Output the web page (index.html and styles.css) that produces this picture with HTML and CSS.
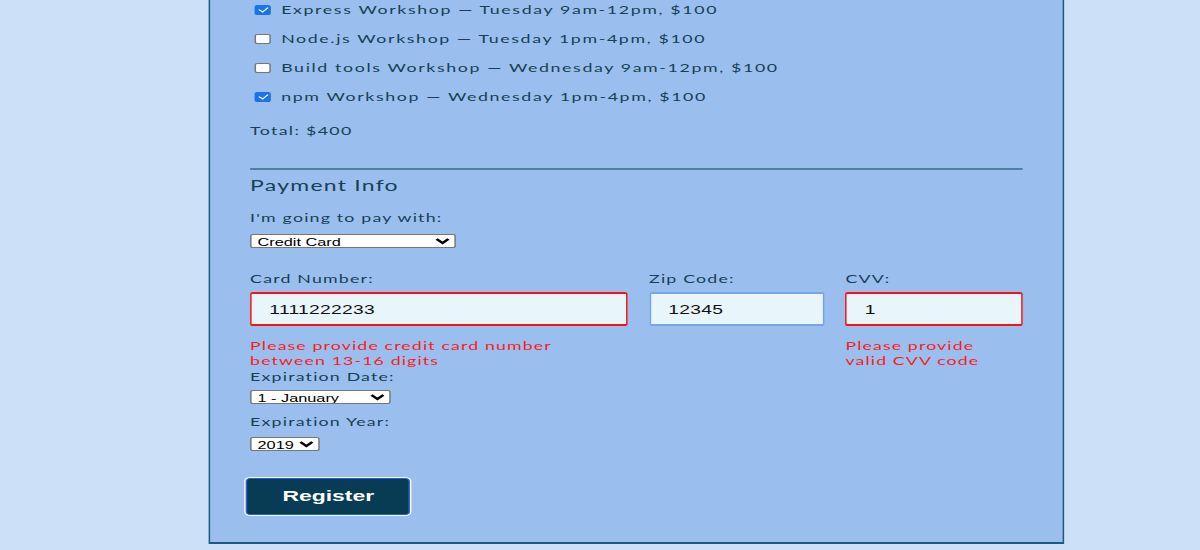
FILE: index.html
```html
<!DOCTYPE html>
<html lang="en">
<head>
<meta charset="utf-8">
<title>Register</title>
<link rel="stylesheet" href="styles.css">
</head>
<body>
<div class="page">
  <form class="form">
    <fieldset class="activities">
      <label class="activity"><input type="checkbox" class="check" checked><span>Express Workshop — Tuesday 9am-12pm, $100</span></label>
      <label class="activity"><input type="checkbox" class="check"><span>Node.js Workshop — Tuesday 1pm-4pm, $100</span></label>
      <label class="activity"><input type="checkbox" class="check"><span>Build tools Workshop — Wednesday 9am-12pm, $100</span></label>
      <label class="activity"><input type="checkbox" class="check" checked><span>npm Workshop — Wednesday 1pm-4pm, $100</span></label>
      <p class="total">Total: $400</p>
    </fieldset>

    <fieldset class="payment">
      <h3 class="section-title">Payment Info</h3>
      <label class="label pay-label" for="payment">I'm going to pay with:</label>
      <select id="payment" class="select select-pay">
        <option>Credit Card</option>
      </select>

      <div class="card-grid">
        <label class="label" for="cc-num">Card Number:</label>
        <label class="label" for="zip">Zip Code:</label>
        <label class="label" for="cvv">CVV:</label>
        <input id="cc-num" class="field invalid" type="text" value="1111222233">
        <input id="zip" class="field valid" type="text" value="12345">
        <input id="cvv" class="field invalid" type="text" value="1">
        <p class="error">Please provide credit card number between 13-16 digits</p>
        <p class="error-spacer"></p>
        <p class="error">Please provide valid CVV code</p>
      </div>

      <label class="label exp-label" for="exp-month">Expiration Date:</label>
      <select id="exp-month" class="select select-month">
        <option>1 - January</option>
      </select>
      <label class="label year-label" for="exp-year">Expiration Year:</label>
      <select id="exp-year" class="select select-year">
        <option>2019</option>
      </select>
    </fieldset>

    <button type="button" class="register">Register</button>
  </form>
</div>
</body>
</html>
```

FILE: styles.css
```css
html, body {
  margin: 0;
  padding: 0;
  background: #cce0f8;
  overflow: hidden;
}

.page {
  width: 811px;
  transform: scaleX(1.48);
  transform-origin: 0 0;
  font-family: Lato, "Liberation Sans", sans-serif;
  color: #173f55;
}

.form {
  box-sizing: border-box;
  width: 578px;
  margin: -60px 0 0 140.5px;
  padding: 53px 27px 27.5px 27.5px;
  background: #9abfee;
  border: 2px solid #1e5a80;
  border-left-width: 1.5px;
  border-right-width: 1.5px;
}

fieldset {
  border: 0;
  margin: 0;
  padding: 0;
  min-width: 0;
}

.activity {
  display: flex;
  align-items: center;
  height: 29px;
  font-size: 12px;
  letter-spacing: 1.1px;
}

.check {
  appearance: none;
  -webkit-appearance: none;
  position: relative;
  box-sizing: border-box;
  flex: none;
  width: 10.8px;
  height: 10px;
  margin: 0 6.8px 0 3.4px;
  background: #fff;
  border: 1px solid #767676;
  border-radius: 2px;
}

.check:checked {
  background: #1a73e8;
  border-color: #1a73e8;
}

.check:checked::after {
  content: "";
  position: absolute;
  left: 2.8px;
  top: 0.6px;
  width: 3px;
  height: 5px;
  border: solid #fff;
  border-width: 0 1.6px 1.6px 0;
  transform: rotate(40deg);
}

.total {
  margin: 10px 0 0;
  line-height: 20px;
  font-size: 12px;
  letter-spacing: 0.9px;
}

.payment {
  margin-top: 27px;
  border-top: 2px solid #4f7fa3;
}

.section-title {
  margin: 4px 0 0;
  font-size: 15.5px;
  font-weight: normal;
  line-height: 22px;
  letter-spacing: 0.85px;
  color: #173f58;
}

.label {
  display: block;
  font-size: 12px;
  line-height: 20px;
  letter-spacing: 0.8px;
}

.pay-label {
  margin-top: 12px;
}

.select {
  display: block;
  box-sizing: border-box;
  height: 14px;
  padding: 0;
  font-family: "Liberation Sans", Arial, sans-serif;
  font-size: 11px;
  color: #000;
  background: #fff;
  border: 1px solid #767676;
  border-radius: 2px;
}

.select-pay {
  margin-top: 6px;
  width: 139px;
}

.card-grid {
  display: grid;
  grid-template-columns: 254.7fr 118.2fr 118.9fr;
  column-gap: 14.2px;
  margin-top: 21px;
}

.field {
  box-sizing: border-box;
  width: 100%;
  height: 34px;
  margin-top: 3px;
  padding: 0 0 0 12px;
  font-family: "Liberation Sans", Arial, sans-serif;
  font-size: 13px;
  letter-spacing: 0.2px;
  color: #111;
  background: #e8f5fa;
  border: 2px solid;
  border-left-width: 1.5px;
  border-right-width: 1.5px;
  border-radius: 2px;
  outline: none;
}

.invalid {
  border-color: #ff1010;
}

.valid {
  border-color: #78a6e4;
}

.error,
.error-spacer {
  max-width: 90%;
  margin: 11.5px 0 0;
  font-size: 12px;
  line-height: 15px;
  letter-spacing: 0.75px;
  color: #ff1a1a;
}

.exp-label {
  line-height: 17px;
}

.select-month {
  margin-top: 5.5px;
  width: 94.6px;
}

.year-label {
  margin-top: 8px;
}

.select-year {
  margin-top: 5px;
  width: auto;
}

.register {
  display: block;
  box-sizing: border-box;
  width: 111px;
  height: 37px;
  margin: 26.5px 0 0 -2.7px;
  padding: 0;
  font-family: "Liberation Sans", Arial, sans-serif;
  font-size: 15.5px;
  font-weight: bold;
  color: #fff;
  background: #083c55;
  border: 1px solid #2f62c8;
  border-radius: 3px;
  box-shadow: 0 0 0 1px #f4f8ff;
}
```
